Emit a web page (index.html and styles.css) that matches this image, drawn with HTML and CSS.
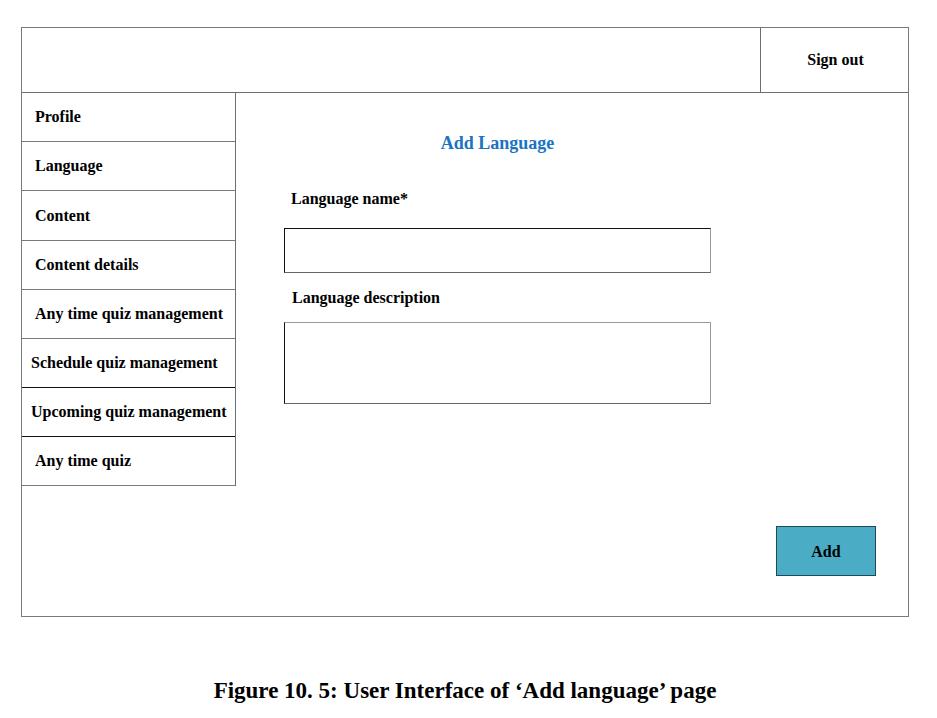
FILE: index.html
```html
<!DOCTYPE html>
<html>
<head>
<meta charset="utf-8">
<link rel="stylesheet" href="styles.css">
</head>
<body>
<div class="frame">
  <div class="header">
    <div class="header-space"></div>
    <div class="signout">Sign out</div>
  </div>
  <div class="body">
    <nav class="sidebar">
      <div class="nav-item">Profile</div>
      <div class="nav-item">Language</div>
      <div class="nav-item nav-tall">Content</div>
      <div class="nav-item">Content details</div>
      <div class="nav-item">Any time quiz management</div>
      <div class="nav-item nav-tight dark">Schedule quiz management</div>
      <div class="nav-item nav-tight dark">Upcoming quiz management</div>
      <div class="nav-item">Any time quiz</div>
    </nav>
    <main class="main">
      <div class="form">
        <h1 class="title">Add Language</h1>
        <label class="label label-name">Language name*</label>
        <div class="input"></div>
        <label class="label label-desc">Language description</label>
        <div class="textarea"></div>
      </div>
      <div class="actions">
        <button class="add-btn">Add</button>
      </div>
    </main>
  </div>
</div>
<p class="caption">Figure 10. 5: User Interface of ‘Add language’ page</p>
</body>
</html>
```
FILE: styles.css
```css
* { box-sizing: border-box; }
body {
  margin: 0;
  background: #fff;
  font-family: "Liberation Serif", "Times New Roman", serif;
  color: #000;
}
.frame {
  margin: 27px 0 0 21px;
  width: 888px;
  height: 590px;
  border: 1px solid #7a7a7a;
  display: flex;
  flex-direction: column;
}
.header {
  height: 65px;
  border-bottom: 1px solid #6e6e6e;
  display: flex;
}
.header-space { flex: 1; }
.signout {
  width: 148px;
  border-left: 1px solid #6e6e6e;
  display: flex;
  align-items: center;
  justify-content: center;
  font-weight: bold;
  font-size: 16px;
  padding: 0 0 0 2px;
}
.body {
  flex: 1;
  display: flex;
}
.sidebar {
  width: 214px;
  align-self: flex-start;
  border-right: 1px solid #6e6e6e;
}
.nav-item {
  height: 49px;
  border-bottom: 1px solid #7a7a7a;
  display: flex;
  align-items: center;
  padding-left: 13px;
  font-weight: bold;
  font-size: 16px;
  white-space: nowrap;
}
.nav-item.nav-tall { height: 50px; }
.nav-item.nav-tight { padding-left: 9px; }
.nav-item.dark { border-bottom-color: #111; }
.main {
  flex: 1;
  display: flex;
  flex-direction: column;
  padding: 40px 32px 40px 48px;
}
.form {
  width: 427px;
  display: flex;
  flex-direction: column;
}
.title {
  margin: 0;
  text-align: center;
  color: #1b73c2;
  font-size: 18px;
  line-height: 20px;
  font-weight: bold;
}
.label {
  font-weight: bold;
  font-size: 16px;
  line-height: 18px;
}
.label-name { margin: 37px 0 0 7px; }
.label-desc { margin: 16px 0 0 8px; }
.input {
  margin-top: 20px;
  height: 45px;
  border: 1px solid #111;
  border-right-color: #999;
  border-bottom-color: #666;
}
.textarea {
  margin-top: 15px;
  height: 82px;
  border: 1px solid #999;
  border-left-color: #111;
  border-bottom-color: #666;
}
.actions {
  margin-top: auto;
  display: flex;
  justify-content: flex-end;
}
.add-btn {
  width: 100px;
  height: 50px;
  background: #4bacc6;
  border: 1px solid #1d4a5a;
  font-family: "Liberation Serif", "Times New Roman", serif;
  font-weight: bold;
  font-size: 16px;
  color: #000;
  padding: 2px 0 0;
}
.caption {
  margin: 61px 0 0 21px;
  width: 888px;
  text-align: center;
  font-weight: bold;
  font-size: 23px;
  line-height: 26px;
}
```
